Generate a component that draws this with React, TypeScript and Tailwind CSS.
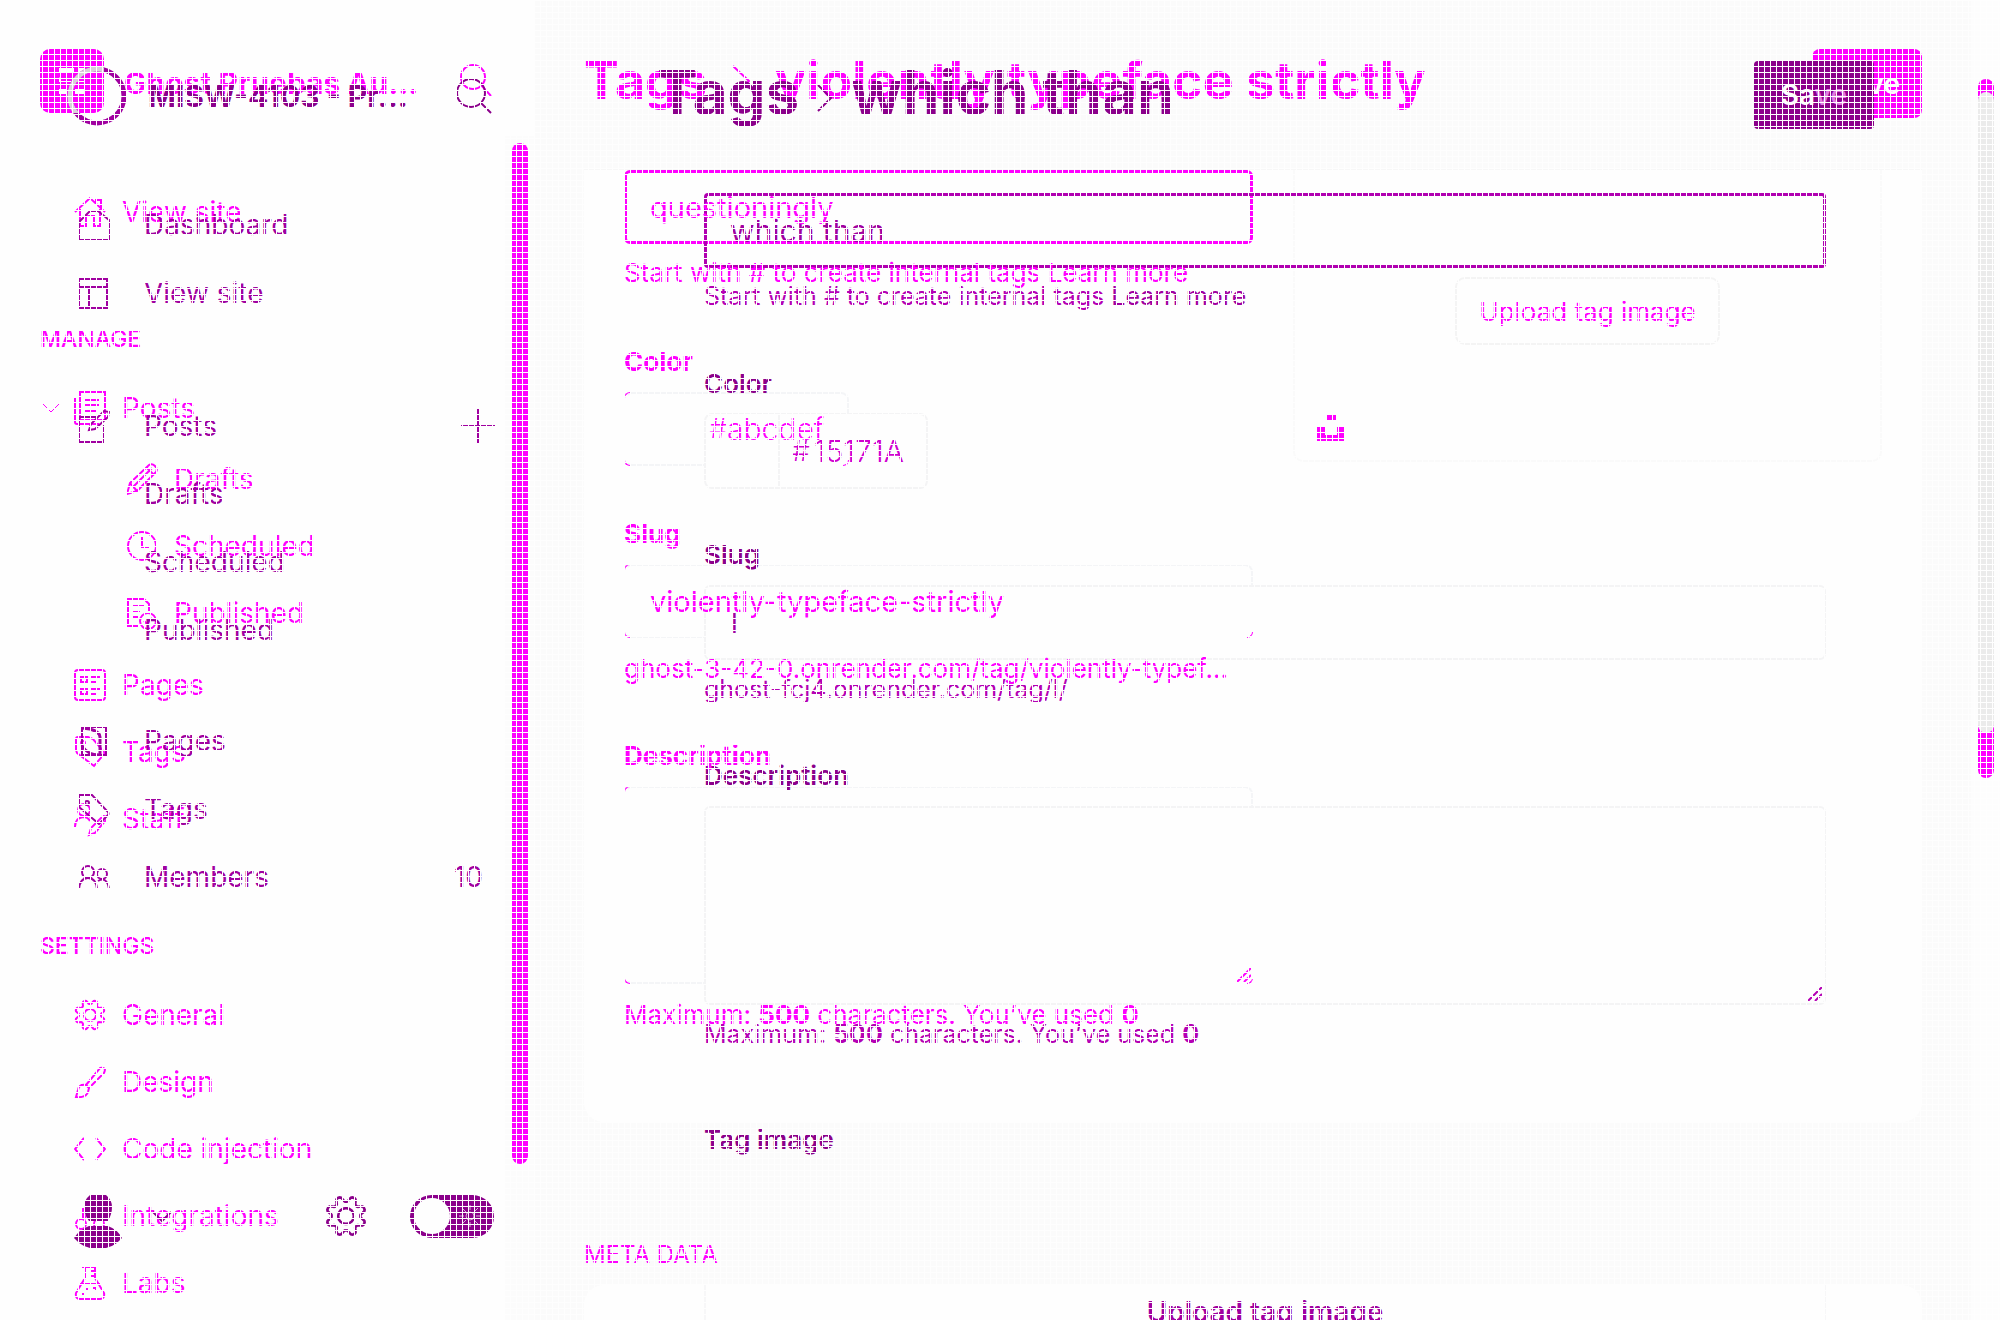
import React from "react";

type IconProps = { children: React.ReactNode; w?: number; h?: number; className?: string; sw?: number };

function Icon({ children, w = 32, h = 32, className = "", sw = 2 }: IconProps) {
  return (
    <svg
      width={w}
      height={h}
      viewBox={`0 0 ${w} ${h}`}
      fill="none"
      stroke="currentColor"
      strokeWidth={sw}
      aria-hidden="true"
      className={`shrink-0 ${className}`}
    >
      {children}
    </svg>
  );
}

/* Eight-toothed gear outline centred on 16,16, with a notch at the top. */
const gear =
  Array.from({ length: 96 }, (_, i) => {
    const t = (i / 96) * Math.PI * 2;
    const wave = Math.max(-1, Math.min(1, -Math.cos(8 * t) * 1.5));
    const r = 13 + 2 * wave;
    return `${i ? "L" : "M"}${(16 + r * Math.sin(t)).toFixed(2)} ${(16 - r * Math.cos(t)).toFixed(2)}`;
  }).join("") + "Z";

/* ---------- first layer icons ---------- */
const House = () => (
  <Icon>
    <path d="M1 16L16 2l15 14M6 13v17h6V20h8v10h6V13M22 7V4h5v8" />
  </Icon>
);
const PostsIcon = () => (
  <Icon h={34}>
    <path d="M6 1h25v28H6zM1 7v24q0 2 2 2h22M11 9h14M11 14h14M11 20h11" />
  </Icon>
);
const Pencil = () => (
  <Icon>
    <path d="M1 31l3-11L23 2q3-2 6 1t1 6L11 28zM4 20l7 8M8 23L26 5M20 4l8 8" />
  </Icon>
);
const Clock = () => (
  <Icon>
    <circle cx="16" cy="16" r="14" />
    <path d="M16 7v10h7" />
  </Icon>
);
const Published = () => (
  <Icon>
    <path d="M13 29H2V2h16l5 5v7M6 9h12M6 15h8M6 20h7" />
    <circle cx="22" cy="24" r="8" />
    <path d="M18 24l3 3 5-6" />
  </Icon>
);
const PagesIcon = () => (
  <Icon>
    <rect x="1" y="1" width="30" height="30" rx="3" />
    <path d="M7 8h6v5H7zM7 20h6v5H7zM17 8h9M17 13h6M17 20h9M17 25h6" />
  </Icon>
);
const TagA = () => (
  <Icon>
    <path d="M2 14V3q0-2 2-2h10l5 2 12 14-11 13L3 17z" />
    <circle cx="9" cy="7" r="2" />
  </Icon>
);
const Staff = () => (
  <Icon h={36}>
    <circle cx="10" cy="9" r="6" />
    <path d="M1 26q0-9 8-10 5 0 7 4M15 34l2-7L29 15q4 0 3 4L21 32z" />
  </Icon>
);
const GearA = () => (
  <Icon>
    <path d={gear} />
    <circle cx="16" cy="16" r="6" />
  </Icon>
);
const Brush = () => (
  <Icon>
    <path d="M12 19L26 2q3-1 5 1 0 2-1 4L15 22zM12 19q-7-1-8 5l-2 7q10 1 12-5l1-4" />
  </Icon>
);
const Code = () => (
  <Icon>
    <path d="M10 5L1 16l9 11M22 5l9 11-9 11" />
  </Icon>
);
const Nodes = () => (
  <Icon>
    <circle cx="7" cy="24" r="5" />
    <circle cx="25" cy="24" r="5" />
    <circle cx="16" cy="7" r="5" />
    <path d="M9 19V8M14 12l-4 8M18 12l4 8" />
  </Icon>
);
const Flask = () => (
  <Icon h={34}>
    <path d="M8 1h14M11 1v11L2 27q-1 6 4 6h20q5 0 4-6L21 12V1M17 5h4M17 10h4M6 18h20M12 23h2M19 22h3v3M8 28h2" />
  </Icon>
);

/* ---------- second layer icons ---------- */
const HomeB = () => (
  <Icon>
    <path d="M1 31V13L12 2h8l11 9v20z" />
  </Icon>
);
const LayoutB = () => (
  <Icon>
    <path d="M1 2h28v29H1zM1 10h28M11 10v21" />
  </Icon>
);
const Edit = () => (
  <Icon h={34}>
    <path d="M19 8H1v25h24V16M11 21l2-6L26 2l5 1-1 5-13 12z" />
  </Icon>
);
const PagesB = () => (
  <Icon>
    <path d="M4 2h24v28H4z" />
    <path d="M4 3l8 1q10 3 10 8v17M4 21q6 9 17 9" strokeWidth="3" />
  </Icon>
);
const TagB = () => (
  <Icon>
    <path d="M1 14V2h13l16 17q1 2 0 3l-9 9L1 14z" />
    <circle cx="9" cy="10" r="2" />
  </Icon>
);
const Members = () => (
  <Icon>
    <circle cx="10" cy="11" r="6" />
    <circle cx="24" cy="13" r="5" />
    <path d="M1 28q1-11 9-11t9 11M20 20q9-5 11 8" />
  </Icon>
);

function NavA({ icon, children, sub = false }: { icon: React.ReactNode; children: string; sub?: boolean }) {
  return (
    <a
      href="#"
      className={
        sub
          ? "flex h-[67px] items-center gap-4 pl-[126px] text-[28px] leading-9"
          : "flex h-[67px] items-center gap-4 pl-[74px] text-[28px] leading-9"
      }
    >
      {icon}
      <span>{children}</span>
    </a>
  );
}

function NavB({ icon, children, count }: { icon?: React.ReactNode; children: string; count?: string }) {
  return (
    <a href="#" className="flex h-[68px] items-center pr-[22px] pl-[78px] text-[28px] leading-9">
      <span className="w-[66px]">{icon}</span>
      <span>{children}</span>
      {count && <span className="ml-auto">{count}</span>}
    </a>
  );
}

const Resizer = ({ className }: { className: string }) => (
  <svg width="14" height="14" viewBox="0 0 14 14" stroke="currentColor" strokeWidth="2" aria-hidden="true" className={className}>
    <path d="M0 14L14 0M7 14l7-7" />
  </svg>
);

/* Coloured corner arcs that sit on a field's rounded border. */
const Corners = () => (
  <>
    <span className="absolute -top-0.5 -left-0.5 size-1.5 rounded-tl-lg border-t border-l" />
    <span className="absolute -bottom-0.5 -left-0.5 size-1.5 rounded-bl-lg border-b border-l" />
    <span className="absolute -right-0.5 -bottom-0.5 z-20 size-1.5 rounded-br-lg border-r border-b" />
  </>
);

function SidebarA() {
  return (
    <aside className="flex w-[535px] shrink-0 bg-[#fefefe] text-[#ff00ff]">
      <div className="w-[505px]">
        <header className="flex h-[178px] items-start pr-[13px] pl-10">
          <svg width="64" height="64" viewBox="0 0 64 64" className="mt-[49px] shrink-0" role="img" aria-label="Ghost">
            <rect width="64" height="64" rx="10" fill="#ff00ff" />
            <path d="M19 19h15v5H19zM39 19h5v5h-5zM19 40h8v5h-8zM35 40h10v5H35z" fill="#fefefe" />
            <path d="M19.500 28.500v4M19 32.500h25" stroke="#fefefe" fill="none" />
          </svg>
          <h2 className="mt-[65px] ml-5 text-[30px] leading-9 font-bold whitespace-nowrap">Ghost Pruebas Au...</h2>
          <button type="button" aria-label="Search" className="mt-16 ml-auto">
            <Icon sw={2}>
              <circle cx="13" cy="13" r="12" />
              <path d="M22 22l9 10" />
            </Icon>
          </button>
        </header>
        <nav>
          <NavA icon={<House />}>View site</NavA>
          <h3 className="mt-[61px] h-[67px] pl-10 text-[23px] leading-[67px] font-medium">MANAGE</h3>
          <div className="mt-px flex h-[67px] items-center pl-[42px]">
            <button type="button" aria-label="Toggle posts">
              <Icon w={18} h={10} sw={1}>
                <path d="M1 1l8 8 8-8" />
              </Icon>
            </button>
            <a href="#" className="ml-[14px] flex items-center gap-4 text-[28px] leading-9">
              <PostsIcon />
              <span>Posts</span>
            </a>
          </div>
          <div className="mt-1">
            <NavA sub icon={<Pencil />}>Drafts</NavA>
            <NavA sub icon={<Clock />}>Scheduled</NavA>
            <NavA sub icon={<Published />}>Published</NavA>
          </div>
          <div className="mt-[5px]">
            <NavA icon={<PagesIcon />}>Pages</NavA>
            <NavA icon={<TagA />}>Tags</NavA>
            <NavA icon={<Staff />}>Staff</NavA>
          </div>
          <h3 className="mt-[61px] h-[67px] pl-10 text-[23px] leading-[67px] font-medium">SETTINGS</h3>
          <div className="mt-px">
            <NavA icon={<GearA />}>General</NavA>
            <NavA icon={<Brush />}>Design</NavA>
            <NavA icon={<Code />}>Code injection</NavA>
            <NavA icon={<Nodes />}>Integrations</NavA>
            <NavA icon={<Flask />}>Labs</NavA>
          </div>
        </nav>
      </div>
      <div className="mt-[136px] flex-1 bg-[#fcfcfc] px-[7px] pt-[7px]">
        <div className="h-[1021px] w-4 rounded-full bg-[#ff00ff]" />
      </div>
    </aside>
  );
}

function SidebarB() {
  return (
    <aside className="relative z-10 w-[505px] shrink-0 text-[#a000a0]">
      <header className="flex h-[191px] items-start pr-[13px] pl-[67px] text-[#8b008b]">
        <svg width="60" height="60" viewBox="0 0 60 60" className="mt-[66px] shrink-0" role="img" aria-label="Site">
          <clipPath id="ring-overlap">
            <rect width="37" height="47" />
          </clipPath>
          <circle cx="30" cy="30" r="27" fill="none" stroke="#a000a0" strokeWidth="5" />
          <circle cx="30" cy="30" r="27" fill="none" stroke="#d9cfd9" strokeWidth="5" clipPath="url(#ring-overlap)" />
        </svg>
        <h2 className="mt-[78px] ml-[21px] text-[30px] leading-9 font-bold">MISW-4103 - Pr...</h2>
        <button type="button" aria-label="Search" className="mt-[78px] ml-auto">
          <Icon w={36} h={36} sw={2}>
            <circle cx="15" cy="15" r="14" />
            <path d="M25 25l10 10" />
          </Icon>
        </button>
      </header>
      <nav>
        <NavB icon={<HomeB />}>Dashboard</NavB>
        <NavB icon={<LayoutB />}>View site</NavB>
        <div className="mt-[65px] flex items-center">
          <div className="flex-1">
            <NavB icon={<Edit />}>Posts</NavB>
          </div>
          <button type="button" aria-label="New post" className="mr-[10px]">
            <Icon w={34} h={34} sw={2}>
              <path d="M17 0v34M0 17h34" />
            </Icon>
          </button>
        </div>
        <NavB>Drafts</NavB>
        <NavB>Scheduled</NavB>
        <NavB>Published</NavB>
        <div className="mt-[43px]">
          <NavB icon={<PagesB />}>Pages</NavB>
          <NavB icon={<TagB />}>Tags</NavB>
          <NavB icon={<Members />} count="10">Members</NavB>
        </div>
      </nav>
      <footer className="mt-[284px] flex items-start pl-[74px] text-[#8b008b]">
        <button type="button" aria-label="Account" className="flex items-start">
          <svg width="48" height="54" viewBox="0 0 48 54" fill="currentColor" aria-hidden="true">
            <path d="M16 0h16q6 5 6 12t-4 14H15q-5-7-5-14T16 0zM15 31h19q9 3 14 12-9 11-24 11T0 43q6-9 15-12z" />
          </svg>
          <Icon w={20} h={12} className="mt-4 ml-[30px]">
            <path d="M1 1l9 9 9-9" />
          </Icon>
        </button>
        <button type="button" aria-label="Settings" className="ml-[153px]">
          <svg width="42" height="42" viewBox="0 0 32 32" fill="none" stroke="currentColor" strokeWidth="2" aria-hidden="true">
            <path d={gear} />
            <circle cx="16" cy="16" r="6" strokeWidth="2" />
          </svg>
        </button>
        <label className="relative ml-[43px] block h-[43px] w-[84px]">
          <input type="checkbox" role="switch" aria-label="Night mode" className="block h-[43px] w-[84px] appearance-none rounded-full bg-[#8b008b]" />
          <span className="absolute top-[3px] left-1 size-9 rounded-full bg-[#fefefe]" />
          <svg width="24" height="24" viewBox="0 0 24 24" fill="none" stroke="#d8b0d8" className="absolute top-[9px] left-12" aria-hidden="true">
            <circle cx="12" cy="12" r="4" />
            <path d="M12 1v5M12 18v5M1 12h5M18 12h5M4 4l4 4M16 16l4 4M20 4l-4 4M8 16l-4 4" />
          </svg>
        </label>
      </footer>
    </aside>
  );
}

function MainA() {
  return (
    <main className="min-w-0 flex-1 bg-[#fbfbfb] px-[49px] text-[#ff00ff]">
      <header className="flex h-[169px] items-start justify-between">
        <h1 className="mt-[49px] flex items-center text-[52px] leading-[64px] font-bold whitespace-nowrap">
          Tags
          <Icon w={20} h={32} sw={2} className="mx-6">
            <path d="M2 1l16 15L2 31" />
          </Icon>
          violently typeface strictly
        </h1>
        <button type="button" className="mt-[49px] h-[69px] rounded-lg bg-[#ff00ff] px-[22px] text-[28px] font-semibold text-[#fefefe]">
          Save
        </button>
      </header>
      <section className="flex rounded-b-[20px] border-t border-[#f7f7f7] bg-[#fefefe] px-10 pb-[89px]">
        <div className="w-1/2">
          <div className="rounded-md border-[3px] border-[#ff00ff]">
            <input aria-label="Name" defaultValue="questioningly" className="relative z-20 block h-[68px] w-full bg-transparent px-[23px] text-[29px] outline-none" />
          </div>
          <p className="relative z-20 mt-[11px] text-[26px] leading-9 whitespace-nowrap">
            Start with # to create internal tags <a href="#">Learn more</a>
          </p>
          <label htmlFor="color-a" className="mt-[53px] block text-[26px] leading-9 font-bold">Color</label>
          <div className="relative mt-3 flex h-[74px] w-[225px] rounded-lg border-2 border-[#f4f5f7] border-l-[#fefefe]">
            <span className="w-[74px] border-r border-[#f4f5f7]" />
            <label htmlFor="color-a" className="relative z-20 ml-3 self-center text-[28px] leading-9 font-light">#</label>
            <input id="color-a" defaultValue="abcdef" className="relative z-20 w-[120px] bg-transparent text-[30px] font-light outline-none" />
            <Corners />
          </div>
          <label htmlFor="slug-a" className="mt-[50px] block text-[26px] leading-9 font-bold">Slug</label>
          <div className="relative mt-3 rounded-lg border-2 border-[#f4f5f7] border-l-[#fefefe]">
            <input id="slug-a" defaultValue="violently-typeface-strictly" className="relative z-20 block h-[70px] w-full bg-transparent px-6 text-[29px] outline-none" />
            <Corners />
          </div>
          <p className="relative z-20 mt-[13px] text-[26px] leading-9 whitespace-nowrap">ghost-3-42-0.onrender.com/tag/violently-typef...</p>
          <label htmlFor="desc-a" className="relative z-20 mt-[51px] block text-[26px] leading-9 font-bold">Description</label>
          <div className="relative mt-3 rounded-lg border-2 border-[#f4f5f7] border-l-[#fefefe]">
            <textarea id="desc-a" className="block h-[194px] w-full resize-none bg-transparent p-5 text-[28px] outline-none" />
            <Resizer className="absolute right-0 bottom-0 z-20" />
            <Corners />
          </div>
          <p className="relative z-20 mt-[13px] text-[26px] leading-9 whitespace-nowrap">
            Maximum: <b>500</b> characters. You’ve used <b>0</b>
          </p>
        </div>
        <div className="flex-1 pl-10">
          <div className="flex flex-col items-center rounded-b-[10px] border-x-2 border-b-2 border-[#fafafa] pt-[107px] pb-[19px]">
            <button type="button" className="relative z-20 h-[68px] rounded-[10px] border-2 border-[#f4f4f4] px-[22px] text-[26px]">Upload tag image</button>
            <svg width="28" height="26" viewBox="0 0 28 26" fill="currentColor" role="img" aria-label="Unsplash" className="relative z-20 mt-[70px] ml-[22px] self-start">
              <path d="M9 0h10v6H9zM0 12h8v8h12v-8h8v14H0z" />
            </svg>
          </div>
        </div>
      </section>
      <h2 className="mt-[115px] text-[24px] leading-9">META DATA</h2>
      <section className="mt-3 h-10 rounded-t-[20px] bg-[#fefefe]" />
    </main>
  );
}

function MainB() {
  return (
    <main className="min-w-0 flex-1 pl-[30px] text-[#b400b4]">
      <header className="relative z-10 flex h-[193px] items-start justify-between pr-[97px] pl-[122px] text-[#8b008b]">
        <h1 className="mt-14 flex items-center text-[60px] leading-[72px] font-bold whitespace-nowrap">
          Tags
          <Icon w={16} h={28} sw={2} className="mx-[18px] mt-3">
            <path d="M1 1l13 13L1 27" />
          </Icon>
          which than
        </h1>
        <button type="button" className="mt-[61px] h-[68px] rounded bg-[#8b008b] px-[27px] text-[28px] font-semibold text-[#fefefe]">
          Sa<span className="text-[#e07be0]">ve</span>
        </button>
      </header>
      <section className="relative z-10 pr-[145px] pl-[169px]">
        <input aria-label="Tag name" defaultValue="which than" className="block h-[75px] w-full rounded border-[3px] border-[#b000b0] px-[23px] text-[30px] text-[#a000a0] outline-none" />
        <p className="mt-[10px] text-[25px] leading-9">
          Start with # to create internal tags <a href="#" className="text-[#a000a0]">Learn more</a>
        </p>
        <label htmlFor="color-b" className="mt-[52px] block text-[26px] leading-9 font-semibold text-[#8b008b]">Color</label>
        <div className="mt-[11px] flex h-[76px] w-[224px] rounded-lg border-2 border-[#f4f4f5] bg-[#fefefe]">
          <span className="w-[74px] border-r-2 border-[#f4f4f5]" />
          <label htmlFor="color-b" className="ml-3 self-center text-[28px] leading-9 font-light text-[#d000d0]">#</label>
          <input id="color-b" defaultValue="15171A" className="ml-1 w-[110px] text-[30px] font-light text-[#d000d0] outline-none" />
        </div>
        <label htmlFor="slug-b" className="mt-12 block text-[26px] leading-9 font-semibold text-[#8b008b]">Slug</label>
        <input id="slug-b" defaultValue="l" className="mt-3 block h-[75px] w-full rounded-md border-2 border-[#f4f4f5] bg-[#fefefe] px-[25px] text-[28px] text-[#a000a0] outline-none" />
        <p className="mt-[11px] text-[25px] leading-9">ghost-fcj4.onrender.com/tag/l/</p>
        <label htmlFor="desc-b" className="mt-[51px] block text-[26px] leading-9 font-semibold text-[#8b008b]">Description</label>
        <div className="relative mt-3">
          <textarea id="desc-b" className="block h-[199px] w-full resize-none rounded-md border-2 border-[#f4f4f5] bg-[#fefefe] p-5 text-[28px] outline-none" />
          <Resizer className="absolute right-1 bottom-1" />
        </div>
        <p className="mt-[11px] text-[25px] leading-9">
          Maximum: <b>500</b> characters. You’ve used <b>0</b>
        </p>
        <h3 className="mt-[70px] text-[26px] leading-9 font-semibold text-[#8b008b]">Tag image</h3>
        <div className="mt-[126px] border-x-2 border-[#f7f7f8] pt-[10px] text-center">
          <button type="button" className="text-[28px] leading-9 font-semibold text-[#a000a0]">Upload tag image</button>
        </div>
      </section>
    </main>
  );
}

export default function App() {
  return (
    <div className="grid h-screen overflow-hidden bg-[#fefefe] font-['Inter',sans-serif]">
      <div className="flex min-h-0 [grid-area:1/1]">
        <SidebarA />
        <MainA />
        <div className="w-[29px] shrink-0 bg-[#fdfdfd] pt-[79px] pl-[7px]">
          <div className="h-[699px] w-4 rounded-full bg-[#ff00ff] pt-[13px]">
            <div className="h-[641px] w-4 rounded-full bg-[#ebebeb]" />
          </div>
        </div>
      </div>
      <div className="flex min-h-0 [grid-area:1/1]">
        <SidebarB />
        <MainB />
        <div className="w-[29px] shrink-0" />
      </div>
      <div className="pointer-events-none z-50 bg-[linear-gradient(to_right,#fefefe_1px,transparent_1px),linear-gradient(to_bottom,#fefefe_1px,transparent_1px)] bg-[size:6px_6px] [grid-area:1/1]" />
    </div>
  );
}
